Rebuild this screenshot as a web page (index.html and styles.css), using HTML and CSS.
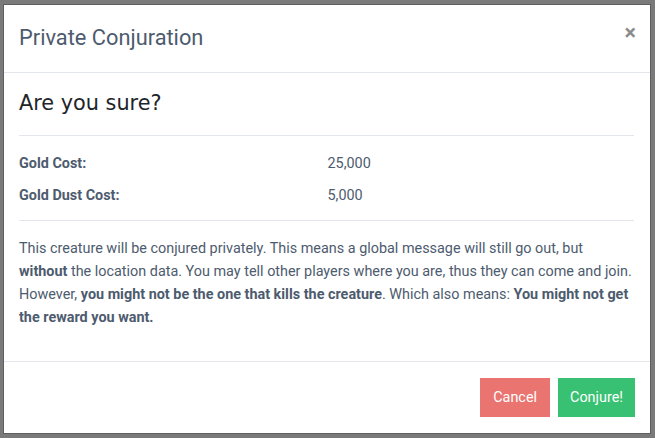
FILE: index.html
```html
<!DOCTYPE html>
<html lang="en">
<head>
<meta charset="utf-8">
<title>Private Conjuration</title>
<link rel="stylesheet" href="styles.css">
</head>
<body>
<div class="backdrop">
  <div class="modal">
    <div class="modal-header">
      <h5 class="modal-title">Private Conjuration</h5>
      <button class="close" type="button" aria-label="Close">×</button>
    </div>
    <div class="modal-body">
      <h3 class="sure">Are you sure?</h3>
      <hr class="rule">
      <dl class="costs">
        <dt>Gold Cost:</dt>
        <dd>25,000</dd>
        <dt>Gold Dust Cost:</dt>
        <dd>5,000</dd>
      </dl>
      <hr class="rule">
      <p class="note">This creature will be conjured privately. This means a global message will still go out, but <strong>without</strong> the location data. You may tell other players where you are, thus they can come and join. However, <strong>you might not be the one that kills the creature</strong>. Which also means: <strong>You might not get the reward you want.</strong></p>
    </div>
    <div class="modal-footer">
      <button class="btn btn-cancel" type="button">Cancel</button>
      <button class="btn btn-conjure" type="button">Conjure!</button>
    </div>
  </div>
</div>
</body>
</html>
```

FILE: styles.css
```css
html, body {
  margin: 0;
  padding: 0;
  height: 100%;
}
body {
  background: #7a7a7a;
  font-family: Roboto, "Liberation Sans", sans-serif;
  font-size: 14.4px;
  line-height: 1.6;
  color: #4d5b6e;
  overflow: hidden;
}
.backdrop {
  padding: 4px 0 0 3px;
}
.modal {
  width: 648px;
  box-sizing: border-box;
  background: #fff;
  border: 1px solid #5e5e5e;
  display: flex;
  flex-direction: column;
}
.modal-header {
  display: flex;
  align-items: flex-start;
  justify-content: space-between;
  padding: 16px 16px 16px 15px;
  border-bottom: 1px solid #e3e6ea;
}
.modal-title {
  margin: 0;
  font-size: 21.8px;
  font-weight: 400;
  line-height: 34.5px;
  color: #4d5b6e;
}
.close {
  background: none;
  border: 0;
  padding: 16px;
  margin: -15px -18px -16px auto;
  font-family: Roboto, "Liberation Sans", sans-serif;
  font-size: 21.6px;
  font-weight: 700;
  line-height: 1;
  color: #000;
  opacity: 0.45;
  cursor: pointer;
}
.modal-body {
  padding: 16px 16px 16px 15px;
}
.sure {
  margin: 0;
  font-family: "DejaVu Sans", sans-serif;
  font-size: 20.8px;
  font-weight: 400;
  line-height: 28px;
  color: #212529;
}
.rule {
  border: 0;
  border-top: 1px solid #e3e6ea;
  margin: 18px 0 16px;
}
.costs {
  display: grid;
  grid-template-columns: 1fr 1fr;
  row-gap: 9px;
  margin: 0;
}
.costs dt {
  font-weight: 700;
  margin: 0;
}
.costs dd {
  margin: 0 0 0 1px;
}
.costs + .rule {
  margin-top: 13px;
}
.note {
  margin: 0 0 16px;
}
.note strong {
  font-weight: 700;
}
.modal-footer {
  display: flex;
  justify-content: flex-end;
  gap: 8px;
  padding: 16px 15px 16px 16px;
  border-top: 1px solid #e3e6ea;
}
.btn {
  font-family: Roboto, "Liberation Sans", sans-serif;
  font-size: 14.4px;
  line-height: 23px;
  padding: 8px 12px;
  border: 0;
  border-radius: 0;
  color: #fff;
  cursor: pointer;
}
.btn-cancel {
  background: #ea7470;
  padding: 8px 13px;
}
.btn-conjure {
  background: #38c172;
}
```
